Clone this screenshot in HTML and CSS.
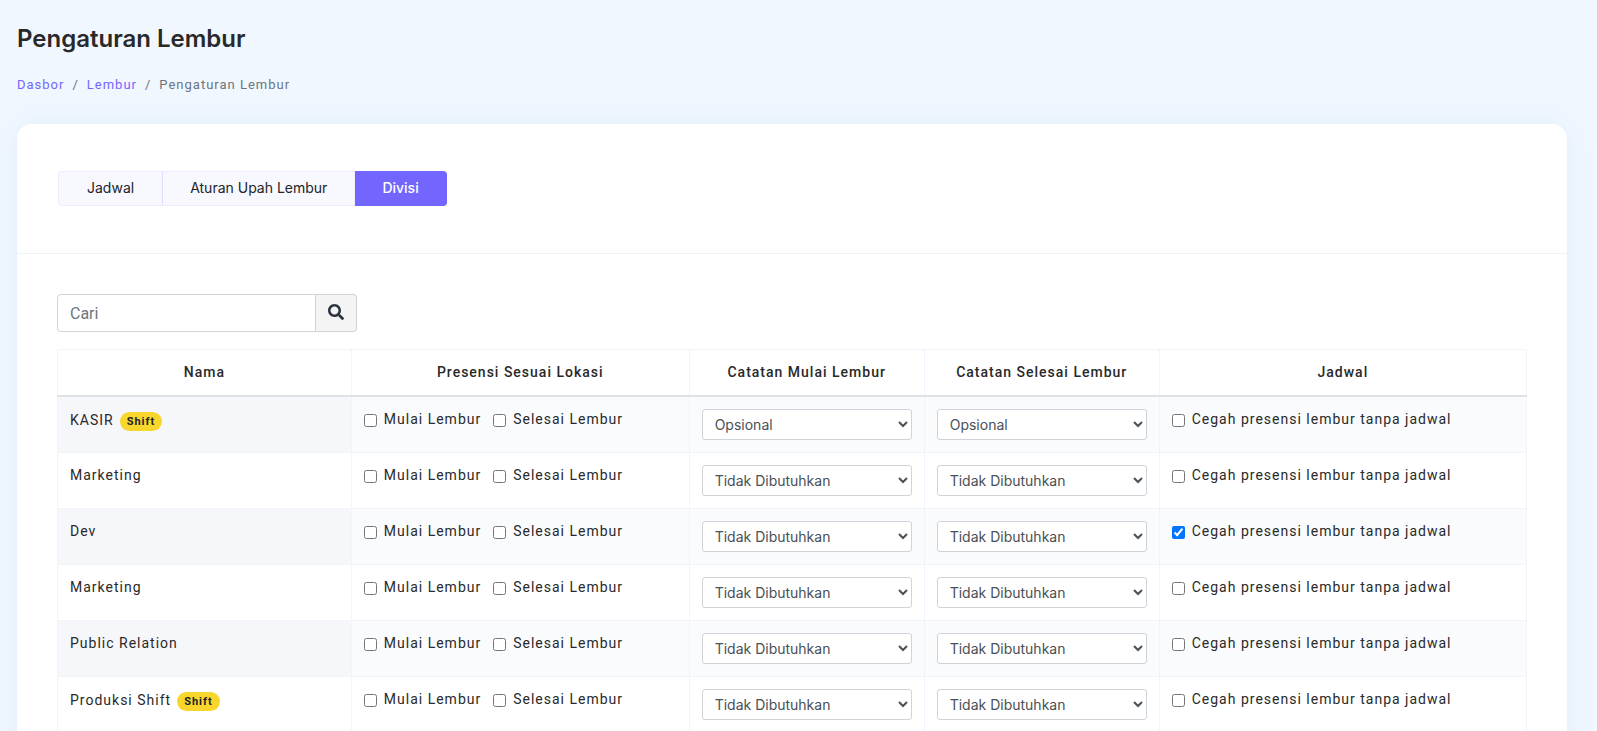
FILE: index.html
```html
<!DOCTYPE html>
<html lang="id">
<head>
<meta charset="utf-8">
<title>Pengaturan Lembur</title>
<link rel="stylesheet" href="styles.css">
</head>
<body>
<main class="page">
  <h1 class="page-title">Pengaturan Lembur</h1>
  <nav class="breadcrumb" aria-label="Breadcrumb">
    <a href="#dasbor">Dasbor</a><span>/</span><a href="#lembur">Lembur</a><span>/</span><span>Pengaturan Lembur</span>
  </nav>
  <section class="card">
    <div class="card-header">
      <div class="tabs">
        <button type="button" class="tab">Jadwal</button>
        <button type="button" class="tab">Aturan Upah Lembur</button>
        <button type="button" class="tab tab-active">Divisi</button>
      </div>
    </div>
    <div class="card-body">
      <form class="search">
        <input class="search-input" type="text" placeholder="Cari" aria-label="Cari">
        <button class="search-button" type="button" aria-label="Cari divisi">
          <svg width="16" height="16" viewBox="0 0 512 512" aria-hidden="true"><path fill="currentColor" d="M505 442.700 405.300 343c-4.500-4.500-10.600-7-17-7H372c27.600-35.300 44-79.700 44-128C416 93.100 322.900 0 208 0S0 93.100 0 208s93.100 208 208 208c48.300 0 92.700-16.400 128-44v16.300c0 6.400 2.500 12.500 7 17l99.700 99.700c9.400 9.400 24.600 9.400 33.900 0l28.300-28.300c9.400-9.400 9.400-24.600.1-34zM208 336c-70.700 0-128-57.200-128-128 0-70.700 57.200-128 128-128 70.700 0 128 57.200 128 128 0 70.700-57.200 128-128 128z"/></svg>
        </button>
      </form>
      <table class="table">
        <thead>
          <tr>
            <th class="col-name">Nama</th>
            <th class="col-location">Presensi Sesuai Lokasi</th>
            <th class="col-note">Catatan Mulai Lembur</th>
            <th class="col-note">Catatan Selesai Lembur</th>
            <th class="col-schedule">Jadwal</th>
          </tr>
        </thead>
        <tbody>
          <tr>
            <td><div class="name">KASIR <span class="badge">Shift</span></div></td>
            <td><div class="checks"><label class="check"><input type="checkbox">Mulai Lembur</label><label class="check"><input type="checkbox">Selesai Lembur</label></div></td>
            <td><select class="select" aria-label="Catatan mulai lembur KASIR"><option>Opsional</option><option>Tidak Dibutuhkan</option></select></td>
            <td><select class="select" aria-label="Catatan selesai lembur KASIR"><option>Opsional</option><option>Tidak Dibutuhkan</option></select></td>
            <td><label class="check"><input type="checkbox">Cegah presensi lembur tanpa jadwal</label></td>
          </tr>
          <tr>
            <td><div class="name">Marketing</div></td>
            <td><div class="checks"><label class="check"><input type="checkbox">Mulai Lembur</label><label class="check"><input type="checkbox">Selesai Lembur</label></div></td>
            <td><select class="select" aria-label="Catatan mulai lembur Marketing"><option>Tidak Dibutuhkan</option><option>Opsional</option></select></td>
            <td><select class="select" aria-label="Catatan selesai lembur Marketing"><option>Tidak Dibutuhkan</option><option>Opsional</option></select></td>
            <td><label class="check"><input type="checkbox">Cegah presensi lembur tanpa jadwal</label></td>
          </tr>
          <tr>
            <td><div class="name">Dev</div></td>
            <td><div class="checks"><label class="check"><input type="checkbox">Mulai Lembur</label><label class="check"><input type="checkbox">Selesai Lembur</label></div></td>
            <td><select class="select" aria-label="Catatan mulai lembur Dev"><option>Tidak Dibutuhkan</option><option>Opsional</option></select></td>
            <td><select class="select" aria-label="Catatan selesai lembur Dev"><option>Tidak Dibutuhkan</option><option>Opsional</option></select></td>
            <td><label class="check"><input type="checkbox" checked>Cegah presensi lembur tanpa jadwal</label></td>
          </tr>
          <tr>
            <td><div class="name">Marketing</div></td>
            <td><div class="checks"><label class="check"><input type="checkbox">Mulai Lembur</label><label class="check"><input type="checkbox">Selesai Lembur</label></div></td>
            <td><select class="select" aria-label="Catatan mulai lembur Marketing"><option>Tidak Dibutuhkan</option><option>Opsional</option></select></td>
            <td><select class="select" aria-label="Catatan selesai lembur Marketing"><option>Tidak Dibutuhkan</option><option>Opsional</option></select></td>
            <td><label class="check"><input type="checkbox">Cegah presensi lembur tanpa jadwal</label></td>
          </tr>
          <tr>
            <td><div class="name">Public Relation</div></td>
            <td><div class="checks"><label class="check"><input type="checkbox">Mulai Lembur</label><label class="check"><input type="checkbox">Selesai Lembur</label></div></td>
            <td><select class="select" aria-label="Catatan mulai lembur Public Relation"><option>Tidak Dibutuhkan</option><option>Opsional</option></select></td>
            <td><select class="select" aria-label="Catatan selesai lembur Public Relation"><option>Tidak Dibutuhkan</option><option>Opsional</option></select></td>
            <td><label class="check"><input type="checkbox">Cegah presensi lembur tanpa jadwal</label></td>
          </tr>
          <tr>
            <td><div class="name">Produksi Shift <span class="badge">Shift</span></div></td>
            <td><div class="checks"><label class="check"><input type="checkbox">Mulai Lembur</label><label class="check"><input type="checkbox">Selesai Lembur</label></div></td>
            <td><select class="select" aria-label="Catatan mulai lembur Produksi Shift"><option>Tidak Dibutuhkan</option><option>Opsional</option></select></td>
            <td><select class="select" aria-label="Catatan selesai lembur Produksi Shift"><option>Tidak Dibutuhkan</option><option>Opsional</option></select></td>
            <td><label class="check"><input type="checkbox">Cegah presensi lembur tanpa jadwal</label></td>
          </tr>
        </tbody>
      </table>
    </div>
  </section>
</main>
</body>
</html>
```
FILE: styles.css
```css
* {
  box-sizing: border-box;
}

body {
  margin: 0;
  background: #f0f7ff;
  color: #292929;
  font: 14px/21px Roboto, "Open Sans", sans-serif;
}

button,
input,
select {
  font-family: inherit;
  margin: 0;
}

.page {
  padding: 24px 30px 0 17px;
}

.page-title {
  margin: 0;
  font: 600 24px/30px Inter, Roboto, sans-serif;
}

.breadcrumb {
  display: flex;
  gap: 8px;
  margin: 20px 0 29px;
  font-size: 13px;
  letter-spacing: 1px;
  color: #6c757d;
}

.breadcrumb a {
  color: #7366ff;
  text-decoration: none;
}

.card {
  background: #fff;
  border-radius: 15px;
  box-shadow: 0 0 37px rgba(8, 83, 156, 0.06);
}

.card-header {
  padding: 47px 41px;
  border-bottom: 1px solid #f0f2f6;
}

.tabs {
  display: flex;
}

.tab {
  height: 35px;
  padding: 0 27px 2px;
  border: 1px solid #eeebff;
  border-left-width: 0;
  background: #f8f8ff;
  color: #212529;
  font: 14px/21px Inter, Roboto, sans-serif;
}

.tab:first-child {
  padding: 0 28px 2px;
  border-left-width: 1px;
  border-right-color: #e0dcff;
  border-radius: 4px 0 0 4px;
}

.tab:last-child {
  border-radius: 0 4px 4px 0;
}

.tab-active {
  border-color: #7366ff;
  background: #7366ff;
  color: #fff;
  font-weight: 500;
}

.card-body {
  padding: 40px;
}

.search {
  display: flex;
  width: 300px;
  height: 38px;
  margin-bottom: 17px;
}

.search-input {
  flex: 1;
  min-width: 0;
  padding: 6px 12px;
  border: 1px solid #ced4da;
  border-radius: 4px 0 0 4px;
  background: #fff;
  font-size: 16px;
}

.search-input::placeholder {
  color: #6c757d;
}

.search-button {
  display: flex;
  align-items: center;
  justify-content: center;
  width: 41px;
  padding: 0 0 2px;
  border: 1px solid #ced4da;
  border-left: 0;
  border-radius: 0 4px 4px 0;
  background: #f4f4f4;
  color: #2c323f;
}

.table {
  width: 100%;
  table-layout: fixed;
  border-collapse: collapse;
  letter-spacing: 1px;
}

.table th,
.table td {
  padding: 12px;
  border: 1px solid #f1f4fd;
  vertical-align: top;
}

.table th {
  border-bottom: 2px solid #dee2e6;
  font-weight: 500;
}

.col-name {
  width: 20%;
}

.col-location {
  width: 23%;
}

.col-note {
  width: 16%;
}

.col-schedule {
  width: 25%;
}

.table tbody tr:nth-child(odd) td {
  background: #fafbfd;
}

.table tbody tr:nth-child(odd) td:first-child {
  background: #f6f7fb;
}

.name {
  display: flex;
  align-items: center;
  gap: 6px;
}

.badge {
  margin-top: 3px;
  padding: 0 7px;
  border-radius: 10px;
  background: #f8d62b;
  color: #212529;
  font: 700 11px/19px Roboto, sans-serif;
}

.checks {
  display: flex;
  gap: 12px;
}

.check {
  display: flex;
  align-items: center;
  gap: 7px;
}

.check input {
  width: 13px;
  height: 13px;
  margin-top: 2px;
}

.select {
  display: block;
  width: 100%;
  height: 31px;
  padding: 4px 8px 5px;
  border: 1px solid #ced4da;
  border-radius: 3px;
  background: #fff;
  color: #495057;
  font: 14px/20px Inter, Roboto, sans-serif;
}
```
